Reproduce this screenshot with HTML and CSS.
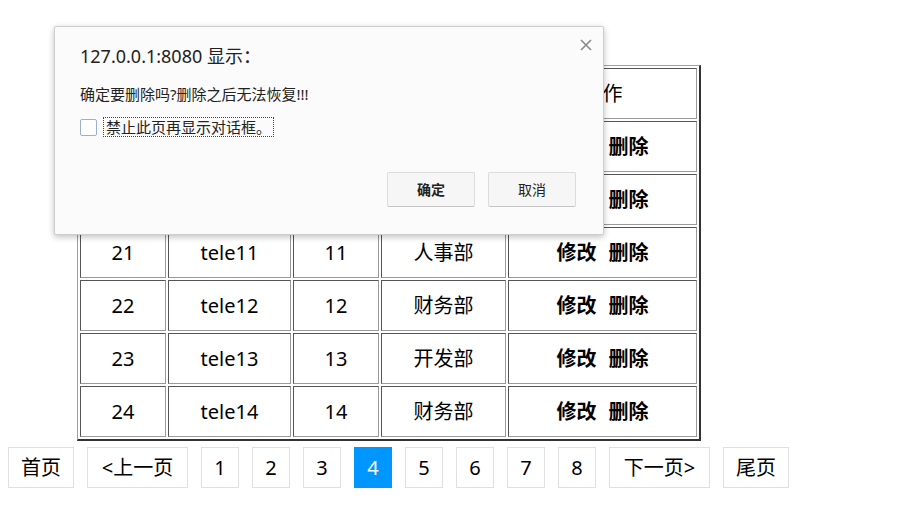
FILE: index.html
```html
<!DOCTYPE html>
<html lang="zh-CN">
<head>
    <meta charset="UTF-8">
    <title>员工列表</title>
    <link rel="stylesheet" href="styles.css">
</head>
<body>

    <!-- Employee table -->
    <table class="emp-table">
        <tr class="head-row">
            <td class="col-id">编号</td>
            <td class="col-name">用户名</td>
            <td class="col-age">年龄</td>
            <td class="col-dept">部门</td>
            <td class="col-op">操作</td>
        </tr>
        <tr>
            <td>19</td><td>tele09</td><td>09</td><td>开发部</td>
            <td><a href="#" class="op">修改</a><a href="#" class="op">删除</a></td>
        </tr>
        <tr>
            <td>20</td><td>tele10</td><td>10</td><td>人事部</td>
            <td><a href="#" class="op">修改</a><a href="#" class="op">删除</a></td>
        </tr>
        <tr>
            <td>21</td><td>tele11</td><td>11</td><td>人事部</td>
            <td><a href="#" class="op">修改</a><a href="#" class="op">删除</a></td>
        </tr>
        <tr>
            <td>22</td><td>tele12</td><td>12</td><td>财务部</td>
            <td><a href="#" class="op">修改</a><a href="#" class="op">删除</a></td>
        </tr>
        <tr>
            <td>23</td><td>tele13</td><td>13</td><td>开发部</td>
            <td><a href="#" class="op">修改</a><a href="#" class="op">删除</a></td>
        </tr>
        <tr>
            <td>24</td><td>tele14</td><td>14</td><td>财务部</td>
            <td><a href="#" class="op">修改</a><a href="#" class="op">删除</a></td>
        </tr>
    </table>

    <!-- Pager -->
    <div class="pager">
        <a href="#" class="page">首页</a>
        <a href="#" class="page wide">&lt;上一页</a>
        <a href="#" class="page num">1</a>
        <a href="#" class="page num">2</a>
        <a href="#" class="page num">3</a>
        <a href="#" class="page num active">4</a>
        <a href="#" class="page num">5</a>
        <a href="#" class="page num">6</a>
        <a href="#" class="page num">7</a>
        <a href="#" class="page num">8</a>
        <a href="#" class="page wide">下一页&gt;</a>
        <a href="#" class="page">尾页</a>
    </div>

    <!-- Confirm dialog -->
    <div class="dialog">
        <span class="dialog-close">
            <svg width="12" height="12" viewBox="0 0 12 12"><path d="M1 1L11 11M11 1L1 11" stroke="#8a8a8a" stroke-width="1.6"/></svg>
        </span>
        <div class="dialog-title">127.0.0.1:8080 显示：</div>
        <div class="dialog-msg">确定要删除吗?删除之后无法恢复!!!</div>
        <label class="dialog-check">
            <span class="check-box"></span>
            <span class="check-text">禁止此页再显示对话框。</span>
        </label>
        <div class="dialog-buttons">
            <span class="btn btn-ok">确定</span>
            <span class="btn">取消</span>
        </div>
    </div>

</body>
</html>
```

FILE: styles.css
```css
/* General */
body {
    margin: 8px;
    background: #fff;
    color: #000;
    font-family: "Noto Sans", "Noto Sans CJK SC", sans-serif;
    line-height: 1.2;
}

/* Employee table */
.emp-table {
    margin: 57px 0 0 69px;
    width: 624px;
    table-layout: fixed;
    border-collapse: separate;
    border-spacing: 2px;
    border-style: solid;
    border-width: 1px 2px 2px 1px;
    border-color: #a0a0a0 #333 #333 #a0a0a0;
}

.emp-table td {
    box-sizing: border-box;
    height: 51px;
    padding: 0;
    text-align: center;
    vertical-align: middle;
    font-size: 20px;
    border: 1px solid;
    border-color: #555 #9a9a9a #9a9a9a #555;
}

.col-id { width: 86px; }
.col-name { width: 123px; }
.col-age { width: 86px; }
.col-dept { width: 125px; }
.col-op { width: 189px; }

.op {
    color: #000;
    font-weight: bold;
    text-decoration: none;
    margin: 0 6px;
}

/* Pager */
.pager {
    display: flex;
    gap: 13px;
    margin-top: 6px;
}

.page {
    display: block;
    box-sizing: border-box;
    height: 41px;
    padding: 0 12px;
    border: 1px solid #e0e0e0;
    background: #fff;
    color: #000;
    font-size: 20px;
    line-height: 39px;
    text-decoration: none;
}

.page.wide {
    width: 101px;
    padding: 0;
    text-align: center;
}

.page.num {
    width: 38px;
    padding: 0;
    text-align: center;
}

.page.active {
    background: #0096ff;
    border-color: #0096ff;
    color: #fff;
}

/* Confirm dialog */
.dialog {
    position: absolute;
    left: 54px;
    top: 26px;
    width: 550px;
    height: 209px;
    box-sizing: border-box;
    padding: 16px 27px 0 25px;
    background: #fbfbfb;
    border: 1px solid #cdcdcd;
    border-radius: 2px;
    box-shadow: 0 2px 6px rgba(0, 0, 0, 0.25);
}

.dialog-close {
    position: absolute;
    top: 12px;
    right: 11px;
    line-height: 0;
}

.dialog-title {
    font-size: 18px;
    line-height: 26px;
    color: #222;
}

.dialog-msg {
    margin-top: 15px;
    font-size: 15px;
    line-height: 20px;
    color: #222;
}

.dialog-check {
    display: flex;
    align-items: center;
    margin-top: 13px;
    height: 20px;
    font-size: 15px;
    color: #222;
}

.check-box {
    width: 15px;
    height: 15px;
    border: 1px solid #9fb0cc;
    border-radius: 2px;
    background: #fff;
    margin-right: 6px;
}

.check-text {
    border: 1px dotted #444;
    padding: 0 2px;
    line-height: 18px;
}

.dialog-buttons {
    display: flex;
    justify-content: flex-end;
    gap: 13px;
    margin-top: 35px;
}

.btn {
    box-sizing: border-box;
    width: 88px;
    height: 35px;
    line-height: 33px;
    text-align: center;
    font-size: 14px;
    color: #222;
    background: #f6f6f6;
    border: 1px solid #dcdcdc;
    border-bottom-color: #c4c4c4;
    border-radius: 2px;
}

.btn-ok {
    font-weight: bold;
}
```
